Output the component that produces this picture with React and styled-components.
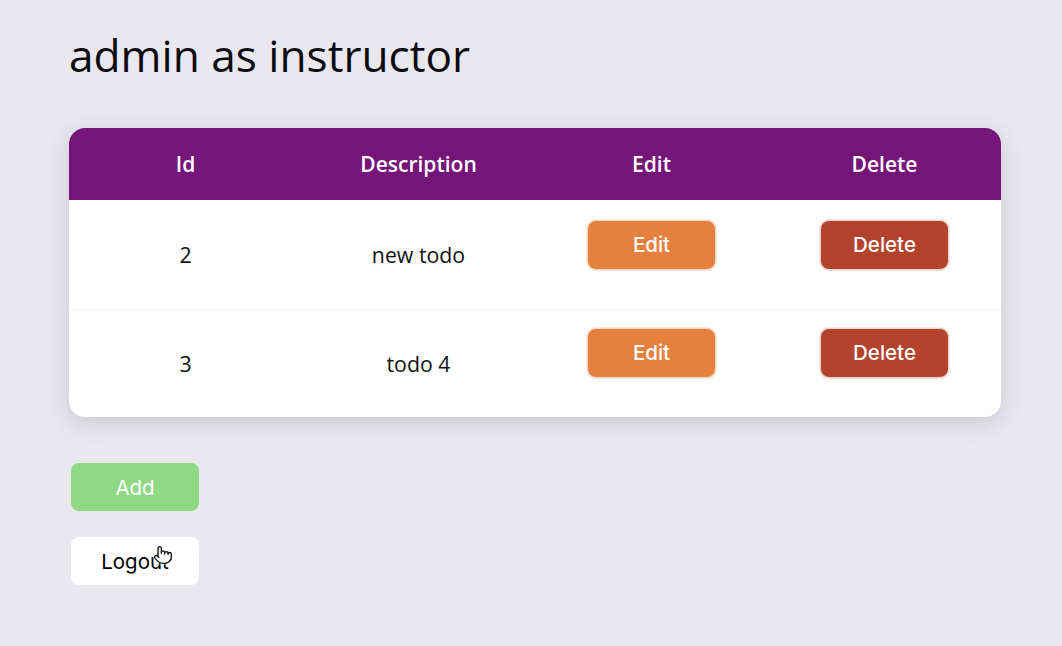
import React from "react";
import styled, { createGlobalStyle } from "styled-components";
import { Pointer } from "lucide-react";

const Global = createGlobalStyle`
  html, body { margin: 0; padding: 0; background: #e9e8ef; }
  body { font-family: "Open Sans", "Noto Sans", sans-serif; }
`;

const Page = styled.div`
  width: 1062px;
  height: 646px;
  box-sizing: border-box;
  padding: 24px 61px 0 69px;
  background: #e9e8ef;
`;

const Title = styled.h1`
  margin: 0 0 42px;
  font-family: "Open Sans", sans-serif;
  font-weight: 400;
  font-size: 44.2px;
  line-height: 62px;
  color: #0b0b0f;
`;

const Card = styled.div`
  width: 932px;
  border-radius: 16px;
  overflow: hidden;
  background: #fff;
  box-shadow: 0 6px 22px rgba(60, 55, 80, 0.18);
`;

const Table = styled.table`
  width: 100%;
  border-collapse: collapse;
  table-layout: fixed;
`;

const Th = styled.th`
  height: 72px;
  padding: 0;
  background: #761579;
  color: #fff;
  font-size: 21px;
  font-weight: 600;
  text-align: center;
`;

const Tr = styled.tr`
  border-top: ${(p) => (p.$first ? "none" : "1px solid #f0eff3")};
`;

const Td = styled.td`
  height: ${(p) => p.$h}px;
  padding: 0;
  text-align: center;
  vertical-align: middle;
  font-size: 21.3px;
  color: #111;
`;

const ActionButton = styled.button`
  width: 129px;
  height: 50px;
  margin-bottom: ${(p) => p.$lift}px;
  border: 1px solid ${(p) => p.$edge};
  box-shadow: 0 0 0 1px ${(p) => p.$edge}80, 0 1px 3px rgba(0,0,0,0.08);
  border-radius: 9px;
  background: ${(p) => p.$bg};
  color: #fff;
  font-family: "Inter", "Liberation Sans", sans-serif;
  font-size: 20.5px;
  font-weight: 500;
  cursor: pointer;
`;

const Controls = styled.div`
  display: flex;
  flex-direction: column;
  align-items: flex-start;
  gap: 26px;
  margin: 46px 0 0 2px;
`;

const FooterButton = styled.button`
  position: relative;
  width: 128px;
  height: 48px;
  border: none;
  border-radius: 8px;
  background: ${(p) => p.$bg};
  color: ${(p) => p.$fg};
  font-family: "Inter", "Liberation Sans", sans-serif;
  font-size: 20.5px;
  font-weight: 400;
`;

const Cursor = styled.span`
  position: absolute;
  left: 82px;
  top: 8px;
  display: flex;
  color: #111;
  filter: drop-shadow(0 0 1px #fff);
`;

const rows = [
  { id: 2, description: "new todo", h: 109, lift: 20 },
  { id: 3, description: "todo 4", h: 107, lift: 22 },
];

export default function App() {
  return (
    <>
      <Global />
      <Page>
        <Title>admin as instructor</Title>
        <Card>
          <Table>
            <thead>
              <tr>
                <Th>Id</Th>
                <Th>Description</Th>
                <Th>Edit</Th>
                <Th>Delete</Th>
              </tr>
            </thead>
            <tbody>
              {rows.map((r, i) => (
                <Tr key={r.id} $first={i === 0}>
                  <Td $h={r.h}>{r.id}</Td>
                  <Td $h={r.h}>{r.description}</Td>
                  <Td $h={r.h}>
                    <ActionButton $lift={r.lift} $bg="#e5803f" $edge="#f6d9c4">Edit</ActionButton>
                  </Td>
                  <Td $h={r.h}>
                    <ActionButton $lift={r.lift} $bg="#b3432c" $edge="#f0d3c9">Delete</ActionButton>
                  </Td>
                </Tr>
              ))}
            </tbody>
          </Table>
        </Card>
        <Controls>
          <FooterButton $bg="#90d884" $fg="#fff">Add</FooterButton>
          <FooterButton $bg="#fff" $fg="#000">
            Logout
            <Cursor>
              <Pointer size={20} strokeWidth={1.6} fill="#fff" />
            </Cursor>
          </FooterButton>
        </Controls>
      </Page>
    </>
  );
}
